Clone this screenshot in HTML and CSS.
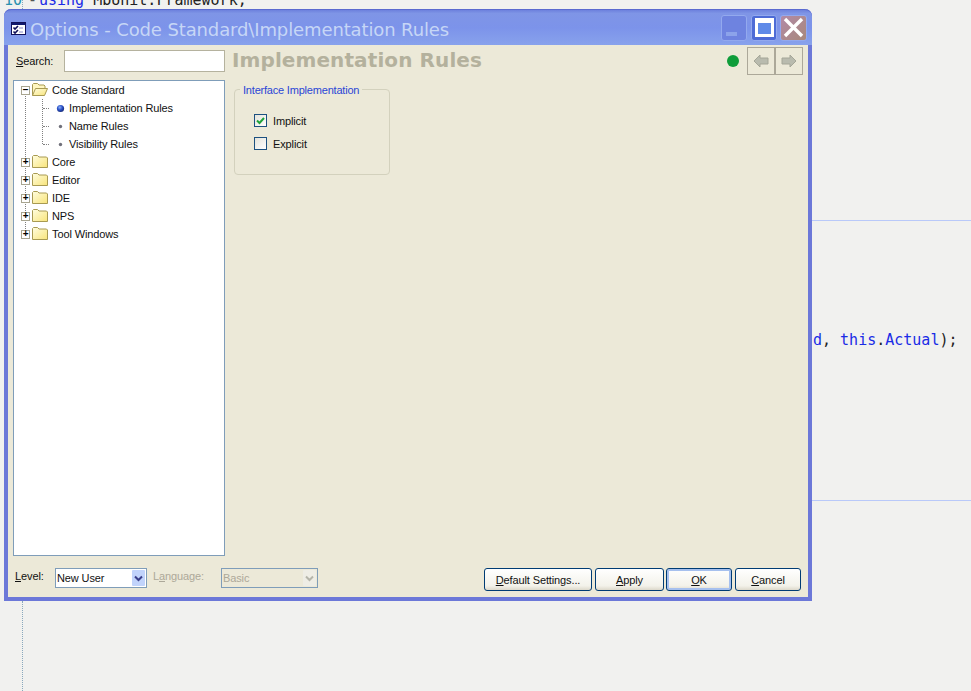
FILE: index.html
```html
<!DOCTYPE html>
<html lang="en">
<head>
<meta charset="utf-8">
<title>Options - Code Standard\Implementation Rules</title>
<link rel="stylesheet" href="styles.css">
</head>
<body>
<svg class="defs" width="0" height="0" aria-hidden="true">
  <defs>
    <linearGradient id="fold" x1="0" y1="0" x2="1" y2="1"><stop offset="0" stop-color="#fffde0"/><stop offset="1" stop-color="#f8e47a"/></linearGradient>
    <radialGradient id="ball" cx=".4" cy=".35" r=".7"><stop offset="0" stop-color="#8fb2f5"/><stop offset=".5" stop-color="#2b52c8"/><stop offset="1" stop-color="#12246e"/></radialGradient>
    <symbol id="folder" viewBox="0 0 16 13"><path d="M.5 12.5V1.5l1-1h4l1.5 1.5h7.5l1 1v9.5z" fill="url(#fold)" stroke="#a89a52"/></symbol>
    <symbol id="folder-open" viewBox="0 0 16 13"><path d="M.5 12.5V1.5l1-1h4l1.5 1.5h5l1 1v2" fill="#fff6c0" stroke="#a89a52"/><path d="M.5 12.5l3-7h12l-3 7z" fill="url(#fold)" stroke="#a89a52"/></symbol>
  </defs>
</svg>
<main class="desktop">
  <div class="code-top"><span class="lineno">10</span><span class="fold">-</span><span class="kw">using</span> MbUnit.Framework;</div>
  <div class="gutter gutter-top"></div>
  <div class="gutter gutter-bottom"></div>
  <div class="rule rule-one"></div>
  <div class="rule rule-two"></div>
  <div class="code-line"><span class="kw">d</span>, <span class="kw">this</span>.<span class="kw">Actual</span>);</div>

  <section class="window">
    <header class="titlebar">
      <svg class="app-icon" width="15" height="13" viewBox="0 0 15 13"><rect x=".5" y=".5" width="14" height="12" fill="#fff" stroke="#10105a"/><rect x="1" y="1" width="13" height="2" fill="#10186e"/><path d="M2.5 5.5l1.5 1.5L7 4M2.5 9.5l1.5 1.5L7 8" fill="none" stroke="#10105a" stroke-width="1.6"/><path d="M8 6h4M8 10h4" stroke="#8a8ac8"/></svg>
      <h1 class="title">Options - Code Standard\Implementation Rules</h1>
      <div class="caption-buttons">
        <div class="cap cap-min"><span class="min-bar"></span></div>
        <div class="cap cap-max"><span class="max-box"></span></div>
        <div class="cap cap-close"><svg width="23" height="23" viewBox="0 0 23 23"><path d="M3 3l17 17M20 3L3 20" stroke="#fff" stroke-width="3.4"/></svg></div>
      </div>
    </header>
    <div class="content">
      <div class="toprow">
        <label class="search-label"><u>S</u>earch:</label>
        <input class="search-input" type="text">
        <h2 class="heading">Implementation Rules</h2>
        <span class="status-dot"></span>
        <div class="nav">
          <div class="nav-btn"><svg width="16" height="14" viewBox="0 0 16 14"><path d="M1 7l6-6v3h8v6H7v3z" fill="#b9bbae" stroke="#a5a698"/></svg></div>
          <div class="nav-btn"><svg width="16" height="14" viewBox="0 0 16 14"><path d="M15 7L9 1v3H1v6h8v3z" fill="#b9bbae" stroke="#a5a698"/></svg></div>
        </div>
      </div>
      <div class="mainrow">
        <div class="tree">
          <div class="tree-list">
            <div class="node"><span class="exp">&minus;</span><svg class="folder" width="16" height="13"><use href="#folder-open"/></svg><span class="node-label">Code Standard</span></div>
            <div class="children">
              <div class="leaf"><svg class="bullet" width="9" height="9" viewBox="0 0 9 9"><circle cx="4.5" cy="4.5" r="3.6" fill="url(#ball)"/></svg><span class="leaf-label">Implementation Rules</span></div>
              <div class="leaf"><svg class="bullet" width="9" height="9" viewBox="0 0 9 9"><circle cx="4.5" cy="4.5" r="1.7" fill="#70707a"/></svg><span class="leaf-label">Name Rules</span></div>
              <div class="leaf"><svg class="bullet" width="9" height="9" viewBox="0 0 9 9"><circle cx="4.5" cy="4.5" r="1.7" fill="#70707a"/></svg><span class="leaf-label">Visibility Rules</span></div>
            </div>
            <div class="node"><span class="exp">+</span><svg class="folder" width="16" height="13"><use href="#folder"/></svg><span class="node-label">Core</span></div>
            <div class="node"><span class="exp">+</span><svg class="folder" width="16" height="13"><use href="#folder"/></svg><span class="node-label">Editor</span></div>
            <div class="node"><span class="exp">+</span><svg class="folder" width="16" height="13"><use href="#folder"/></svg><span class="node-label">IDE</span></div>
            <div class="node"><span class="exp">+</span><svg class="folder" width="16" height="13"><use href="#folder"/></svg><span class="node-label">NPS</span></div>
            <div class="node"><span class="exp">+</span><svg class="folder" width="16" height="13"><use href="#folder"/></svg><span class="node-label">Tool Windows</span></div>
          </div>
        </div>
        <div class="panel">
          <fieldset class="group">
            <legend class="group-title">Interface Implementation</legend>
            <div class="check-row"><span class="check"><svg width="11" height="11" viewBox="0 0 11 11"><path d="M2 5.5l2.5 2.5L9 3" fill="none" stroke="#1fa33a" stroke-width="2"/></svg></span><span>Implicit</span></div>
            <div class="check-row"><span class="check"></span><span>Explicit</span></div>
          </fieldset>
        </div>
      </div>
      <div class="footer">
        <span class="level-label"><u>L</u>evel:</span>
        <div class="combo combo-level"><span class="combo-text">New User</span><span class="combo-btn"><svg width="9" height="7" viewBox="0 0 9 7"><path d="M1 1.5l3.5 3.5L8 1.5" fill="none" stroke="#3a3f8a" stroke-width="2"/></svg></span></div>
        <span class="lang-label">L<u>a</u>nguage:</span>
        <div class="combo combo-lang"><span class="combo-text">Basic</span><span class="combo-btn"><svg width="9" height="7" viewBox="0 0 9 7"><path d="M1 1.5l3.5 3.5L8 1.5" fill="none" stroke="#b5b5aa" stroke-width="2"/></svg></span></div>
        <div class="actions">
          <button class="btn btn-default"><u>D</u>efault Settings...</button>
          <button class="btn btn-apply"><u>A</u>pply</button>
          <button class="btn btn-ok"><u>O</u>K</button>
          <button class="btn btn-cancel"><u>C</u>ancel</button>
        </div>
      </div>
    </div>
  </section>
</main>
</body>
</html>
```
FILE: styles.css
```css
* { box-sizing: border-box; }
html, body { margin: 0; padding: 0; }
body { background: #f1f1ef; font-family: "Liberation Sans", Arial, sans-serif; font-size: 11px; letter-spacing: -.12px; color: #111; }
.defs { position: absolute; }
.desktop { position: relative; width: 971px; height: 691px; overflow: hidden; background: #f1f1ef; }

/* code editor behind the dialog */
.code-top, .code-line { position: absolute; font-family: "DejaVu Sans Mono", monospace; font-size: 15px; line-height: 18px; letter-spacing: 0; white-space: pre; color: #222; }
.code-top { left: 4px; top: -9px; display: flex; }
.lineno { color: #2b91af; width: 24px; }
.fold { width: 11px; color: #555; }
.kw { color: #1a2ce6; }
.code-line { left: 813px; top: 331px; }
.gutter { position: absolute; left: 22px; border-left: 1px dotted #8aa8bc; }
.gutter-top { top: 0; height: 9px; }
.gutter-bottom { top: 601px; height: 90px; }
.rule { position: absolute; left: 812px; right: 0; height: 1px; background: #b9c9f9; }
.rule-one { top: 220px; }
.rule-two { top: 500px; }

/* dialog window */
.window { position: absolute; left: 4px; top: 9px; width: 808px; height: 592px; display: flex; flex-direction: column; border: 4px solid #6c78d8; border-top: 0; border-radius: 7px 7px 0 0; background: #ece9d8; }
.titlebar { height: 36px; flex: none; display: flex; align-items: center; margin: 0 -4px; padding: 0 5px 0 7px; border-radius: 7px 7px 0 0; background: linear-gradient(#6d81dd 0, #7f95e6 10%, #7c93ea 50%, #88a2ec 100%); border-top: 1px solid #5a6ad0; }
.app-icon { flex: none; margin-top: 2px; }
.title { margin: 4px 0 0 4px; flex: 1; font-family: "DejaVu Sans", sans-serif; font-weight: normal; font-size: 18px; letter-spacing: -.12px; color: #c6d6f6; white-space: nowrap; }
.caption-buttons { display: flex; gap: 3px; flex: none; }
.cap { width: 26px; height: 26px; border-radius: 3px; display: flex; align-items: center; justify-content: center; border: 1px solid #93a9ee; }
.cap-min { background: #6e83e0; align-items: flex-end; justify-content: flex-start; padding: 0 0 4px 4px; margin-right: 1px; }
.min-bar { display: block; width: 11px; height: 4px; background: #8ca3ea; }
.cap-max { background: #4d6bd6; }
.max-box { display: block; width: 19px; height: 19px; border: 3px solid #fff; border-top-width: 5px; background: #5f8ae8; }
.cap-close { background: linear-gradient(135deg, #b28aa8, #a8887a); width: 27px; }

.content { flex: 1; min-height: 0; display: flex; flex-direction: column; padding: 2px 5px 0; }
.toprow { height: 28px; flex: none; display: flex; align-items: center; }
.search-label { width: 48px; margin-left: 3px; }
.search-input { width: 161px; height: 22px; padding: 0; border: 1px solid #b5b29e; background: #fff; outline: none; }
.heading { flex: 1; margin: 0 0 2px 7px; font-family: "DejaVu Sans", sans-serif; font-weight: bold; font-size: 20px; letter-spacing: .1px; color: #b4b19d; white-space: nowrap; }
.status-dot { width: 12px; height: 12px; border-radius: 50%; background: #0f9d3a; margin-right: 8px; flex: none; }
.nav { display: flex; flex: none; }
.nav-btn { width: 28px; height: 28px; border: 1px solid #aca899; display: flex; align-items: center; justify-content: center; }

.mainrow { flex: none; height: 476px; margin-top: 5px; display: flex; }
.tree { width: 212px; flex: none; border: 1px solid #7f9db9; background: #fff; }
.tree-list { position: relative; }
.tree-list::before { content: ""; position: absolute; left: 11px; top: 15px; height: 139px; border-left: 1px dotted #808080; }
.node, .leaf { height: 18px; display: flex; align-items: center; position: relative; white-space: nowrap; }
.node { padding-left: 7px; }
.exp { width: 9px; height: 9px; flex: none; border: 1px solid #a8a590; background: #fff; font-size: 10px; line-height: 6px; text-align: center; color: #000; font-weight: bold; position: relative; z-index: 1; }
.folder { margin-left: 2px; flex: none; position: relative; top: -1px; }
.node-label { margin-left: 4px; }
.children { position: relative; }
.children::before { content: ""; position: absolute; left: 28px; top: 0; height: 45px; border-left: 1px dotted #808080; }
.leaf { padding-left: 29px; }
.leaf::before { content: ""; width: 6px; border-top: 1px dotted #808080; flex: none; }
.bullet { margin-left: 7px; flex: none; }
.leaf-label { margin-left: 4px; color: #111; }

.panel { flex: 1; padding-left: 9px; }
.group { width: 156px; height: 94px; margin: 1px 0 0; padding: 0 0 0 5px; border: 1px solid #d3d1bd; border-radius: 4px; }
.group-title { padding: 2px 3px 0; color: #2a46d6; line-height: 14px; letter-spacing: -.2px; }
.check-row { display: flex; align-items: center; height: 23px; gap: 6px; margin-left: 14px; }
.check-row:first-of-type { margin-top: 12px; }
.check { width: 13px; height: 13px; flex: none; border: 1px solid #1c5180; background: linear-gradient(135deg, #e4e3da, #fff); display: flex; align-items: center; justify-content: center; }

.footer { flex: none; margin-top: 12px; display: flex; align-items: flex-start; height: 23px; }
.level-label { width: 40px; margin-left: 2px; line-height: 17px; }
.lang-label { width: 68px; margin-left: 6px; line-height: 17px; color: #aca899; }
.combo { height: 20px; flex: none; display: flex; align-items: center; justify-content: space-between; border: 1px solid #7f9db9; background: #fff; padding: 1px; }
.combo-level { width: 92px; }
.combo-lang { width: 97px; background: #ece9d8; color: #aca899; }
.combo-text { line-height: 16px; }
.combo-btn { width: 13px; height: 16px; display: flex; align-items: center; justify-content: center; border-radius: 1px; background: #c1d3fb; }
.combo-lang .combo-btn { background: #eeede5; }

.actions { margin-left: auto; margin-right: 2px; display: flex; }
.btn { height: 23px; padding: 0; font: inherit; letter-spacing: inherit; color: #111; border: 1px solid #003c74; border-radius: 3px; background: linear-gradient(#fff, #f3f2ea 80%, #dcd8ca); }
.btn-default { width: 108px; margin-right: 3px; }
.btn-apply { width: 69px; margin-right: 2px; }
.btn-ok { width: 66px; margin-right: 3px; box-shadow: inset 0 0 0 2px #a6c0ee; }
.btn-cancel { width: 66px; }
```
